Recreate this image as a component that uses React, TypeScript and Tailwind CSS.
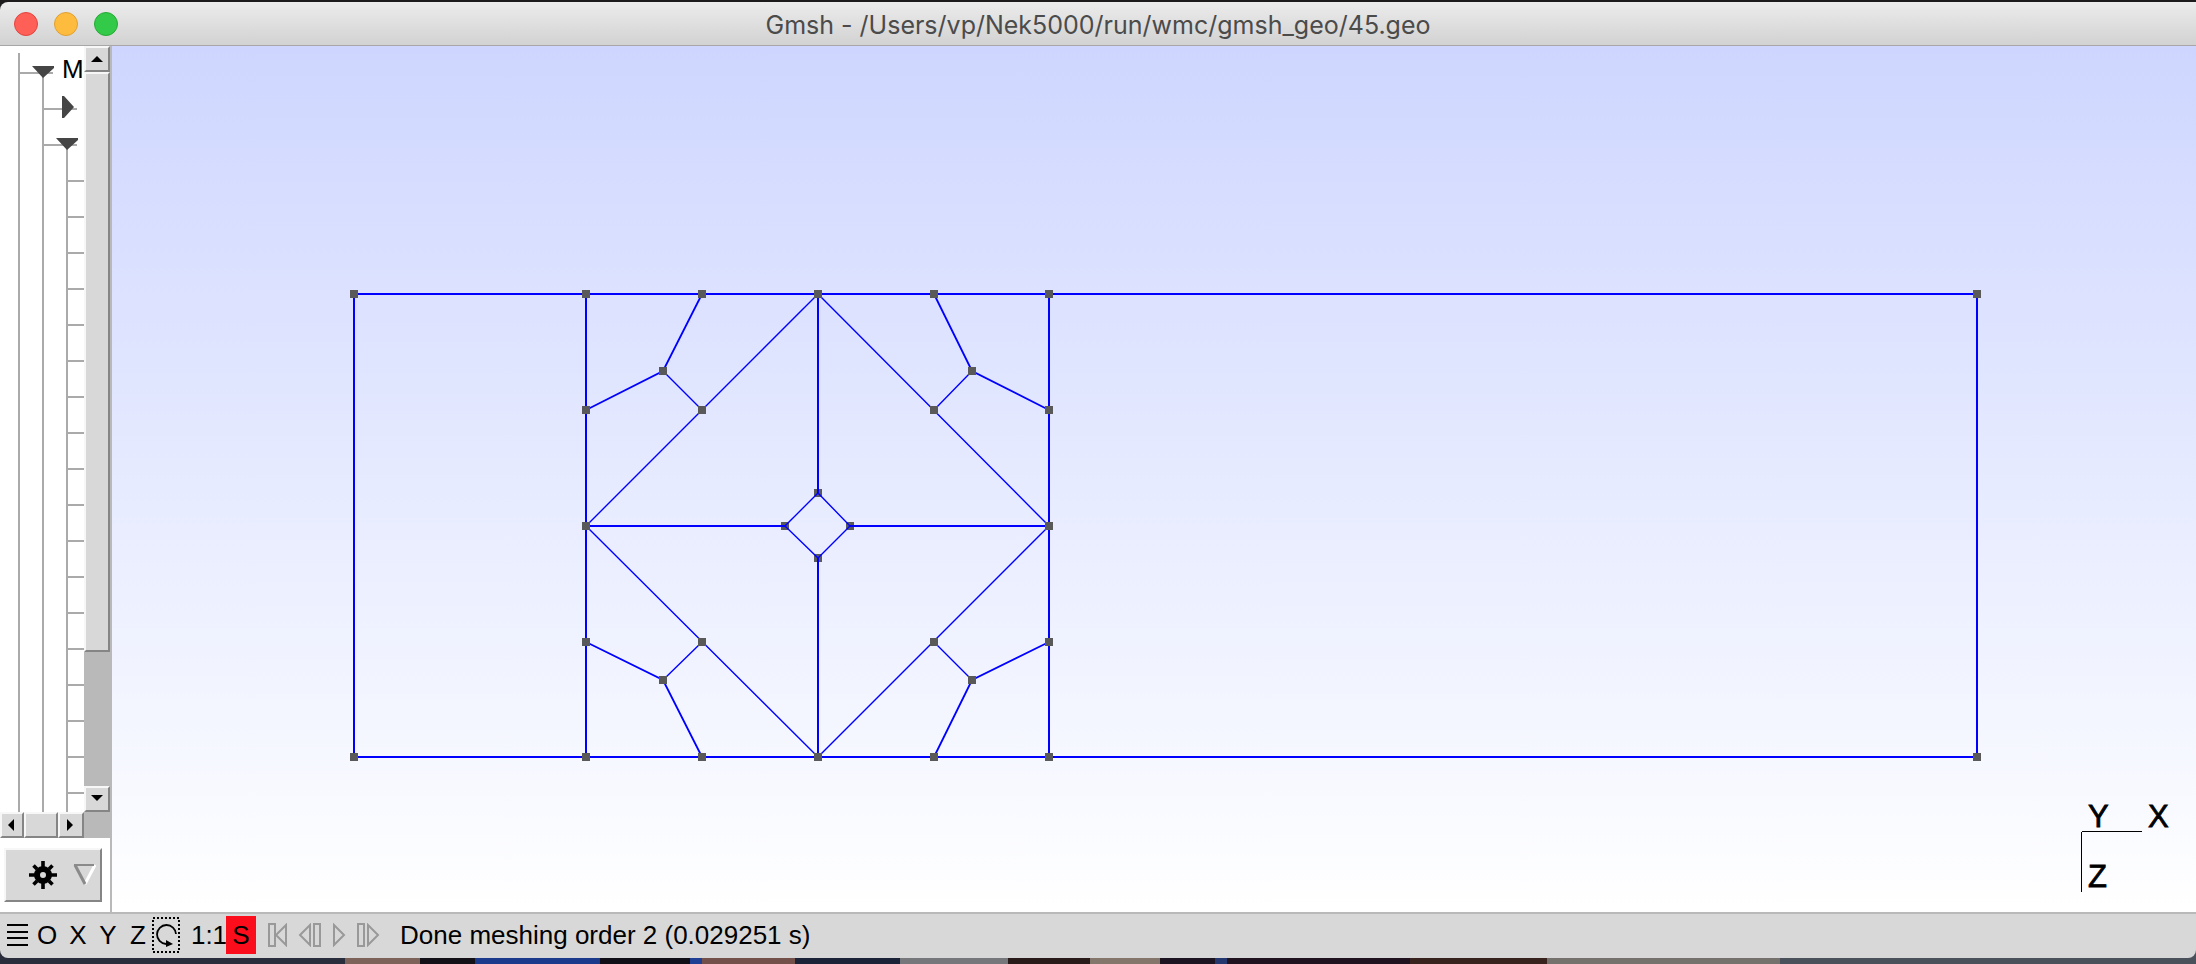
import React from "react";

type Point = [number, number];

const nodes: Point[] = [
  [354, 294], [586, 294], [702, 294], [818, 294], [934, 294], [1049, 294], [1977, 294],
  [663, 371], [972, 371], [586, 410], [702, 410], [934, 410], [1049, 410],
  [586, 526], [1049, 526],
  [586, 642], [702, 642], [934, 642], [1049, 642], [663, 680], [972, 680],
  [354, 757], [586, 757], [702, 757], [818, 757], [934, 757], [1049, 757], [1977, 757],
];
const innerNodes: Point[] = [[818, 493], [785, 526], [850, 526], [818, 558]];

const thick = "M354 294H1977V757H354ZM586 294V757M1049 294V757";
const spokes = "M818 294V493M818 558V757M586 526H785M850 526H1049";
const bent =
  "M702 294L663 371L586 410M934 294L972 371L1049 410M586 642L663 680L702 757M1049 642L972 680L934 757";
const thin =
  "M818 294L586 526L818 757L1049 526ZM818 493L785 526L818 558L850 526ZM663 371L702 410M972 371L934 410M663 680L702 642M972 680L934 642";

const raised =
  "border-2 border-t-[#f7f7f7] border-l-[#f7f7f7] border-r-[#858585] border-b-[#858585] bg-[#d8d8d8]";

function TitleBar() {
  return (
    <header className="grid h-11 shrink-0 grid-cols-[1fr_auto_1fr] items-center rounded-tl-lg border-b border-[#a9a6a9] bg-linear-to-b from-[#ececec] to-[#d2d2d2]">
      <div className="flex gap-4 pl-3.5">
        <button aria-label="Close" className="size-6 rounded-full border border-[#e2443f] bg-[#fe5f57]" />
        <button aria-label="Minimize" className="size-6 rounded-full border border-[#dfa033] bg-[#febc3f]" />
        <button aria-label="Zoom" className="size-6 rounded-full border border-[#27aa35] bg-[#33c949]" />
      </div>
      <h1 className="pt-0.5 font-[Inter,sans-serif] text-[25px] leading-8 text-[#4b4b4b]">
        Gmsh - /Users/vp/Nek5000/run/wmc/gmsh_geo/45.geo
      </h1>
      <div />
    </header>
  );
}

function Tree() {
  const rows = Array.from({ length: 18 }, (_, i) => 135 + i * 36);
  return (
    <div className="min-w-0 flex-1 overflow-hidden bg-white">
      <svg width="84" height="766" className="block" aria-label="Module tree">
        <g stroke="#aaaaaa" strokeWidth="2" shapeRendering="crispEdges" fill="none">
          <path d="M19 7V766M43 30V766M67 102V766M20 27H53M44 63H77M44 99H77" />
          {rows.map((y) => (
            <path key={y} d={`M68 ${y}H84`} />
          ))}
        </g>
        <path d="M32 20H54V22L43 32ZM62 50H64L74 61L64 72H62ZM56 92H78V94L67 104Z" fill="#454545" />
        <text x="62" y="32" fontSize="26" fontFamily="Liberation Sans, sans-serif">M</text>
      </svg>
    </div>
  );
}

function Sidebar() {
  return (
    <aside className="flex w-28 shrink-0 flex-col border-r-2 border-[#b9b9b9] bg-white">
      <div className="flex min-h-0 flex-1">
        <Tree />
        <div className="flex w-[26px] shrink-0 flex-col bg-[#b9b9b9]">
          <button aria-label="Scroll up" className={`flex h-[26px] shrink-0 items-center justify-center ${raised}`}>
            <svg width="12" height="6"><path d="M0 6L6 0L12 6Z" /></svg>
          </button>
          <div className={`h-[580px] ${raised}`} />
          <div className="flex-1" />
          <button aria-label="Scroll down" className={`flex h-[26px] shrink-0 items-center justify-center ${raised}`}>
            <svg width="12" height="8"><path d="M0 0L6 6L12 0Z" /></svg>
          </button>
        </div>
      </div>
      <div className="flex h-[26px] shrink-0 bg-[#b9b9b9]">
        <button aria-label="Scroll left" className={`flex w-6 items-center justify-center ${raised}`}>
          <svg width="8" height="12"><path d="M6 0L0 6L6 12Z" /></svg>
        </button>
        <div className={`w-[34px] ${raised}`} />
        <button aria-label="Scroll right" className={`flex w-[26px] items-center justify-center ${raised}`}>
          <svg width="8" height="12"><path d="M0 0L6 6L0 12Z" /></svg>
        </button>
      </div>
      <div className="h-[74px] shrink-0 pt-2.5 pl-1">
        <button aria-label="Options" className={`flex h-[54px] w-[98px] items-center justify-end gap-4 pr-[3px] ${raised}`}>
          <svg width="28" height="28" viewBox="-14 -14 28 28">
            <circle r="6" fill="none" stroke="#000" strokeWidth="6" />
            <path
              d="M0 -14V-8M0 14V8M-14 0H-8M14 0H8M-9.500 -9.500L-6 -6M9.500 -9.500L6 -6M-9.500 9.500L-6 6M9.500 9.500L6 6"
              stroke="#000"
              strokeWidth="3.600"
            />
          </svg>
          <svg width="24" height="24" fill="none" strokeWidth="3">
            <path d="M22 2L12 21" stroke="#fff" />
            <path d="M12 21L2 2" stroke="#8a8a8a" />
            <path d="M1 2H21" stroke="#8a8a8a" strokeWidth="2" />
          </svg>
        </button>
      </div>
    </aside>
  );
}

function Canvas() {
  return (
    <main className="min-w-0 flex-1 overflow-hidden bg-linear-to-b from-[#ced6ff] to-white">
      <svg viewBox="112 46 2084 866" className="block size-full" aria-label="Geometry">
        <g fill="#595959" shapeRendering="crispEdges">
          {innerNodes.map(([x, y]) => (
            <rect key={`${x}-${y}`} x={x - 4} y={y - 4} width="8" height="8" />
          ))}
        </g>
        <g fill="none" stroke="#0000ff">
          <path d={thick} strokeWidth="2" shapeRendering="crispEdges" />
          <path d={spokes} strokeWidth="2" shapeRendering="crispEdges" />
          <path d={bent} strokeWidth="1.800" />
          <path d={thin} strokeWidth="1.400" />
        </g>
        <g fill="#595959" shapeRendering="crispEdges">
          {nodes.map(([x, y]) => (
            <rect key={`${x}-${y}`} x={x - 4} y={y - 4} width="8" height="8" />
          ))}
        </g>
        <path d="M2082 831.500H2142M2081.500 832V892" stroke="#000" strokeWidth="1" />
        <g fontSize="31" fontFamily="Liberation Sans, sans-serif" stroke="#000" strokeWidth="0.800">
          <text x="2088" y="827">Y</text>
          <text x="2148" y="827">X</text>
          <text x="2088" y="887">Z</text>
        </g>
      </svg>
    </main>
  );
}

function StatusBar() {
  return (
    <footer className="flex h-[46px] shrink-0 items-center rounded-b-lg border-t-2 border-[#b9b9b9] bg-[#d8d8d8] pb-0.5 font-['Liberation_Sans',sans-serif] text-[26px] leading-8">
      <button aria-label="Menu" className="ml-1.5 w-6">
        <svg width="22" height="22" stroke="#000" strokeWidth="2">
          <path d="M1 1H22M1 8H22M1 14H22M1 21H22" />
        </svg>
      </button>
      <button className="w-[34px]">O</button>
      <button className="w-7">X</button>
      <button className="w-8">Y</button>
      <button className="w-7">Z</button>
      <button aria-label="Rotate" className="h-9 w-7">
        <svg width="28" height="36" fill="none" stroke="#000">
          <rect x="1" y="1" width="26" height="34" strokeWidth="2" strokeDasharray="2 2" />
          <path d="M24 17A9.500 9.500 0 1 0 14 27" strokeWidth="1.800" />
          <path d="M14 23L21 27L14 30Z" fill="#000" stroke="none" />
        </svg>
      </button>
      <button className="ml-3 flex w-[34px] justify-center">1:1</button>
      <button className="h-[38px] w-[30px] bg-[#fc0d1b]">S</button>
      <div className="ml-3 flex items-center gap-2.5">
        <button aria-label="First">
          <svg width="20" height="24" fill="none" stroke="#999" strokeWidth="2"><path d="M1 1H7V23H1ZM18 2V22L8 12Z" /></svg>
        </button>
        <button aria-label="Previous">
          <svg width="24" height="24" fill="none" stroke="#999" strokeWidth="2"><path d="M12 2V22L2 12ZM16 1H22V23H16Z" /></svg>
        </button>
        <button aria-label="Play">
          <svg width="14" height="24" fill="none" stroke="#999" strokeWidth="2"><path d="M2 2V22L12 12Z" /></svg>
        </button>
        <button aria-label="Next">
          <svg width="24" height="24" fill="none" stroke="#999" strokeWidth="2"><path d="M2 1H8V23H2ZM12 2V22L22 12Z" /></svg>
        </button>
      </div>
      <p className="ml-5 whitespace-nowrap">Done meshing order 2 (0.029251 s)</p>
    </footer>
  );
}

const wallpaper: [number, number, string][] = [
  [0, 345, "#2a2d3b"],
  [345, 75, "#7d625a"],
  [420, 55, "#141018"],
  [475, 125, "#1b3a8c"],
  [600, 90, "#100e16"],
  [690, 12, "#1f3f94"],
  [702, 93, "#74504a"],
  [795, 105, "#1b2338"],
  [900, 108, "#76777b"],
  [1008, 82, "#2a1b1b"],
  [1090, 70, "#85766c"],
  [1160, 55, "#1c1420"],
  [1215, 12, "#24376f"],
  [1227, 183, "#20121f"],
  [1410, 137, "#38231f"],
  [1547, 233, "#75716d"],
  [1780, 416, "#4a515b"],
];

function Wallpaper() {
  return (
    <svg className="block h-full w-full" viewBox="0 0 2196 16" preserveAspectRatio="none" aria-hidden="true">
      {wallpaper.map(([x, w, color]) => (
        <rect key={x} x={x} width={w + 1} height="16" fill={color} />
      ))}
    </svg>
  );
}

export default function App() {
  return (
    <div className="flex h-screen flex-col bg-[#1d1b1c] pt-0.5">
      <TitleBar />
      <div className="flex min-h-0 flex-1">
        <Sidebar />
        <Canvas />
      </div>
      <div className="bg-linear-to-r from-[#292c3a] to-[#4a525d]">
        <StatusBar />
        <div className="h-1.5">
          <Wallpaper />
        </div>
      </div>
    </div>
  );
}
